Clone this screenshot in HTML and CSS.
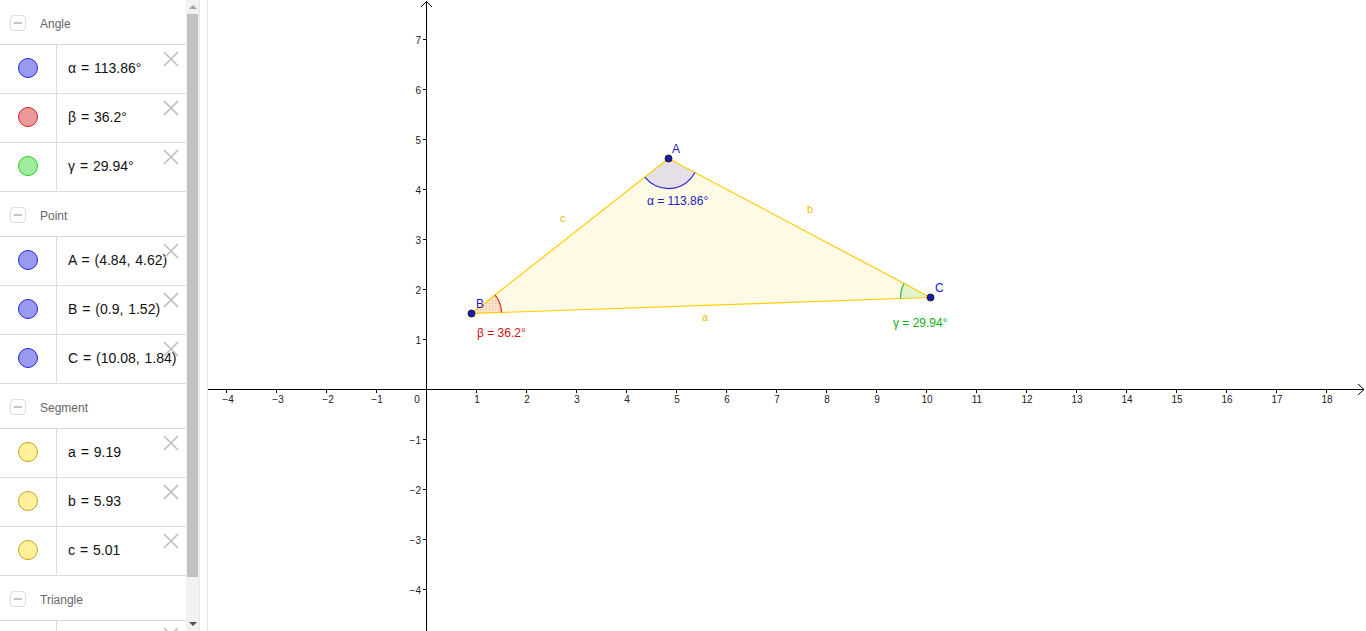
FILE: index.html
```html
<!DOCTYPE html>
<html lang="en">
<head>
<meta charset="utf-8">
<title>Triangle angles</title>
<link rel="stylesheet" href="styles.css">
</head>
<body>
<div class="app">
  <aside class="algebra">
    <div class="list">
      <div class="group-head"><span class="toggle"></span><span class="group-name">Angle</span></div>
      <div class="item"><div class="marble-cell"><span class="marble m-blue"></span></div><div class="formula">α = 113.86°</div><svg class="close" viewBox="0 0 16 16"><path d="M1 1L15 15M15 1L1 15"/></svg></div>
      <div class="item"><div class="marble-cell"><span class="marble m-red"></span></div><div class="formula">β = 36.2°</div><svg class="close" viewBox="0 0 16 16"><path d="M1 1L15 15M15 1L1 15"/></svg></div>
      <div class="item"><div class="marble-cell"><span class="marble m-green"></span></div><div class="formula">γ = 29.94°</div><svg class="close" viewBox="0 0 16 16"><path d="M1 1L15 15M15 1L1 15"/></svg></div>

      <div class="group-head"><span class="toggle"></span><span class="group-name">Point</span></div>
      <div class="item"><div class="marble-cell"><span class="marble m-blue"></span></div><div class="formula">A = (4.84, 4.62)</div><svg class="close" viewBox="0 0 16 16"><path d="M1 1L15 15M15 1L1 15"/></svg></div>
      <div class="item"><div class="marble-cell"><span class="marble m-blue"></span></div><div class="formula">B = (0.9, 1.52)</div><svg class="close" viewBox="0 0 16 16"><path d="M1 1L15 15M15 1L1 15"/></svg></div>
      <div class="item"><div class="marble-cell"><span class="marble m-blue"></span></div><div class="formula">C = (10.08, 1.84)</div><svg class="close" viewBox="0 0 16 16"><path d="M1 1L15 15M15 1L1 15"/></svg></div>

      <div class="group-head"><span class="toggle"></span><span class="group-name">Segment</span></div>
      <div class="item"><div class="marble-cell"><span class="marble m-yellow"></span></div><div class="formula">a = 9.19</div><svg class="close" viewBox="0 0 16 16"><path d="M1 1L15 15M15 1L1 15"/></svg></div>
      <div class="item"><div class="marble-cell"><span class="marble m-yellow"></span></div><div class="formula">b = 5.93</div><svg class="close" viewBox="0 0 16 16"><path d="M1 1L15 15M15 1L1 15"/></svg></div>
      <div class="item"><div class="marble-cell"><span class="marble m-yellow"></span></div><div class="formula">c = 5.01</div><svg class="close" viewBox="0 0 16 16"><path d="M1 1L15 15M15 1L1 15"/></svg></div>

      <div class="group-head"><span class="toggle"></span><span class="group-name">Triangle</span></div>
      <div class="item"><div class="marble-cell"></div><div class="formula"></div><svg class="close" viewBox="0 0 16 16"><path d="M1 1L15 15M15 1L1 15"/></svg></div>
    </div>
    <div class="scrollbar">
      <div class="sb-btn"><span class="arrow-up"></span></div>
      <div class="sb-track"><div class="sb-thumb"></div></div>
      <div class="sb-btn"><span class="arrow-down"></span></div>
    </div>
  </aside>
  <div class="splitter"></div>
  <main class="graphics">
    <svg class="canvas" viewBox="208 0 1158 631" width="1158" height="631">
      <defs>
        <pattern id="dots" width="3" height="3" patternUnits="userSpaceOnUse">
          <rect x="0" y="0" width="1" height="1" fill="#d8a070" opacity="0.55"/>
        </pattern>
      </defs>

      <!-- axes -->
      <g class="axis">
        <line x1="208" y1="389.5" x2="1364" y2="389.5"/>
        <polyline points="1358,384 1364,389.5 1358,395" fill="none"/>
        <line x1="426.5" y1="1" x2="426.5" y2="631"/>
        <polyline points="421,7 426.5,1.5 432,7" fill="none"/>
        <path d="M226.5 389.5V393M276.5 389.5V393M326.5 389.5V393M376.5 389.5V393M476.5 389.5V393M526.5 389.5V393M576.5 389.5V393M626.5 389.5V393M676.5 389.5V393M726.5 389.5V393M776.5 389.5V393M826.5 389.5V393M876.5 389.5V393M926.5 389.5V393M976.5 389.5V393M1026.5 389.5V393M1076.5 389.5V393M1126.5 389.5V393M1176.5 389.5V393M1226.5 389.5V393M1276.5 389.5V393M1326.5 389.5V393"/>
        <path d="M423 39.5H426.5M423 89.5H426.5M423 139.5H426.5M423 189.5H426.5M423 239.5H426.5M423 289.5H426.5M423 339.5H426.5M423 439.5H426.5M423 489.5H426.5M423 539.5H426.5M423 589.5H426.5"/>
      </g>
      <g class="tick-labels x-labels">
        <text x="228" y="403">−4</text>
        <text x="278" y="403">−3</text>
        <text x="328" y="403">−2</text>
        <text x="377" y="403">−1</text>
        <text x="477" y="403">1</text>
        <text x="527" y="403">2</text>
        <text x="577" y="403">3</text>
        <text x="627" y="403">4</text>
        <text x="677" y="403">5</text>
        <text x="727" y="403">6</text>
        <text x="777" y="403">7</text>
        <text x="827" y="403">8</text>
        <text x="877" y="403">9</text>
        <text x="927" y="403">10</text>
        <text x="977" y="403">11</text>
        <text x="1027" y="403">12</text>
        <text x="1077" y="403">13</text>
        <text x="1127" y="403">14</text>
        <text x="1177" y="403">15</text>
        <text x="1227" y="403">16</text>
        <text x="1277" y="403">17</text>
        <text x="1327" y="403">18</text>
      </g>
      <text class="tick-labels" x="417" y="403">0</text>
      <g class="tick-labels y-labels">
        <text x="421" y="43.5">7</text>
        <text x="421" y="93.5">6</text>
        <text x="421" y="143.5">5</text>
        <text x="421" y="193.5">4</text>
        <text x="421" y="243.5">3</text>
        <text x="421" y="293.5">2</text>
        <text x="421" y="343.5">1</text>
        <text x="421" y="443.5">−1</text>
        <text x="421" y="493.5">−2</text>
        <text x="421" y="543.5">−3</text>
        <text x="421" y="593.5">−4</text>
      </g>

      <polygon class="tri-fill" points="668.5,158.5 471.5,313.5 930.5,297.5"/>

      <path class="sec-a" d="M668.5 158.5L695 172.5A30 30 0 0 1 644.9 177.1Z"/>
      <path class="sec-b" d="M471.5 313.5L495.1 295A30 30 0 0 1 501.5 312.5Z"/>
      <path class="sec-b-dots" d="M471.5 313.5L495.1 295A30 30 0 0 1 501.5 312.5Z"/>
      <path class="sec-c" d="M930.5 297.5L900.5 298.5A30 30 0 0 1 904 283.5Z"/>

      <polygon class="tri-edge" points="668.5,158.5 471.5,313.5 930.5,297.5"/>

      <path class="arc-a" d="M695 172.5A30 30 0 0 1 644.9 177.1"/>
      <path class="arc-b" d="M495.1 295A30 30 0 0 1 501.5 312.5"/>
      <path class="arc-c" d="M900.5 298.5A30 30 0 0 1 904 283.5"/>

      <g class="edge-label">
        <text x="702" y="321">a</text>
        <text x="807" y="213">b</text>
        <text x="560" y="222">c</text>
      </g>

      <text class="ang-label lab-a" x="647" y="205">α = 113.86°</text>
      <text class="ang-label lab-b" x="477" y="337">β = 36.2°</text>
      <text class="ang-label lab-c" x="893" y="327">γ = 29.94°</text>

      <g class="pt">
        <circle cx="668.5" cy="158.5" r="3.5"/>
        <circle cx="471.5" cy="313.5" r="3.5"/>
        <circle cx="930.5" cy="297.5" r="3.5"/>
      </g>
      <g class="pt-label">
        <text x="672" y="153">A</text>
        <text x="476" y="308">B</text>
        <text x="935" y="292">C</text>
      </g>
    </svg>
  </main>
</div>
</body>
</html>
```

FILE: styles.css
```css
* { box-sizing: border-box; }

html, body {
  margin: 0;
  padding: 0;
  width: 1366px;
  height: 631px;
  overflow: hidden;
  background: #ffffff;
  font-family: "Liberation Sans", Arial, sans-serif;
}

.app {
  display: flex;
  width: 1366px;
  height: 631px;
}

/* ---------- algebra view ---------- */
.algebra {
  display: flex;
  width: 200px;
  height: 631px;
  flex: none;
  background: #ffffff;
}

.list {
  width: 186px;
  height: 631px;
  overflow: hidden;
  flex: none;
}

.group-head {
  display: flex;
  align-items: center;
  height: 45px;
  border-bottom: 1px solid #dcdcdc;
  padding-left: 10px;
  padding-top: 2px;
}

.toggle {
  position: relative;
  width: 16px;
  height: 16px;
  border: 1px solid #dddddd;
  border-radius: 4px;
  margin-right: 14px;
  flex: none;
}

.toggle::after {
  content: "";
  position: absolute;
  left: 3px;
  top: 6px;
  width: 8px;
  height: 2px;
  background: #c4c4c4;
}

.group-name {
  font-size: 12px;
  color: #666666;
  padding-top: 2px;
}

.item {
  position: relative;
  display: flex;
  height: 49px;
  border-bottom: 1px solid #dcdcdc;
}

.marble-cell {
  width: 57px;
  flex: none;
  display: flex;
  align-items: center;
  justify-content: center;
  border-right: 1px solid #dcdcdc;
  padding-bottom: 3px;
}

.marble {
  display: block;
  width: 20px;
  height: 20px;
  border-radius: 50%;
  border: 1px solid;
}

.m-blue { background: #9999f2; border-color: #2323d8; }
.m-red { background: #ec9999; border-color: #d52020; }
.m-green { background: #9ded9d; border-color: #27cc27; }
.m-yellow { background: #fff099; border-color: #c8a21e; }

.formula {
  display: flex;
  align-items: center;
  padding-left: 11px;
  padding-bottom: 3px;
  font-size: 14px;
  color: #111111;
  white-space: nowrap;
  word-spacing: 1px;
}

.close {
  position: absolute;
  left: 163px;
  top: 6px;
  width: 16px;
  height: 16px;
}

.close path {
  stroke: #bdbdbd;
  stroke-width: 1.6;
  fill: none;
}

/* ---------- scrollbar ---------- */
.scrollbar {
  width: 14px;
  height: 631px;
  flex: none;
  display: flex;
  flex-direction: column;
  background: #f1f1f1;
  border-right: 1px solid #e6e6e6;
}

.sb-btn {
  height: 14px;
  flex: none;
  display: flex;
  align-items: center;
  justify-content: center;
}

.arrow-up {
  width: 0;
  height: 0;
  border-left: 4px solid transparent;
  border-right: 4px solid transparent;
  border-bottom: 4px solid #a3a3a3;
}

.arrow-down {
  width: 0;
  height: 0;
  border-left: 4px solid transparent;
  border-right: 4px solid transparent;
  border-top: 4px solid #505050;
}

.sb-track {
  flex: 1;
  padding: 0 1px;
}

.sb-thumb {
  height: 563px;
  background: #c1c1c1;
}

/* ---------- splitter ---------- */
.splitter {
  width: 8px;
  height: 631px;
  flex: none;
  background: #ffffff;
  border-right: 1px solid #e4e4e4;
}

/* ---------- graphics view ---------- */
.graphics {
  flex: 1;
  height: 631px;
  overflow: hidden;
}

.canvas {
  display: block;
}

.axis line,
.axis path,
.axis polyline {
  stroke: #000000;
  stroke-width: 1;
  fill: none;
}

.tick-labels text,
text.tick-labels {
  font-family: "Liberation Sans", Arial, sans-serif;
  font-size: 10px;
  fill: #222222;
  text-anchor: middle;
}

.y-labels text {
  text-anchor: end;
}

.tri-fill {
  fill: #fffae6;
  stroke: none;
}

.tri-edge {
  fill: none;
  stroke: #ffcc00;
  stroke-width: 1.2;
  stroke-linejoin: round;
}

.sec-a { fill: rgba(0, 0, 255, 0.1); stroke: none; }
.sec-b { fill: rgba(255, 60, 0, 0.13); stroke: none; }
.sec-b-dots { fill: url(#dots); stroke: none; }
.sec-c { fill: rgba(0, 200, 0, 0.12); stroke: none; }

.arc-a, .arc-b, .arc-c {
  fill: none;
  stroke-width: 1.2;
}

.arc-a { stroke: #2d2dd2; }
.arc-b { stroke: #d42020; }
.arc-c { stroke: #30c030; }

.edge-label text {
  font-family: "Liberation Sans", Arial, sans-serif;
  font-size: 11px;
  fill: #ebbd00;
}

.ang-label {
  font-family: "Liberation Sans", Arial, sans-serif;
  font-size: 12px;
}

.lab-a { fill: #1a1ac0; }
.lab-b { fill: #cc1010; }
.lab-c { fill: #10b010; }

.pt circle {
  fill: #1a1ab4;
  stroke: #202020;
  stroke-width: 1;
}

.pt-label text {
  font-family: "Liberation Sans", Arial, sans-serif;
  font-size: 12px;
  fill: #1a1acc;
}
```
